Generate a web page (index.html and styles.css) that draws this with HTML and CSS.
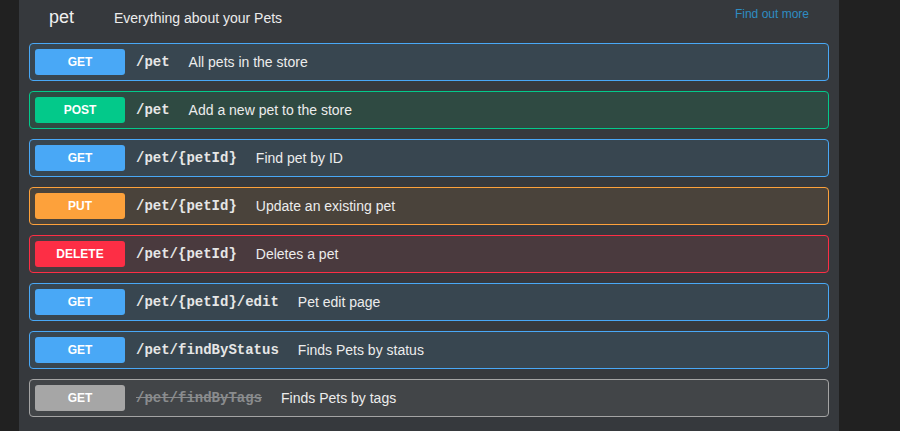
FILE: index.html
```html
<!DOCTYPE html>
<html>
<head>
<meta charset="utf-8">
<link rel="stylesheet" href="styles.css">
</head>
<body>
<div class="page">
  <div class="gutter"></div>
  <div class="panel">
    <div class="tag-head">
      <span class="tag-name">pet</span>
      <span class="tag-desc">Everything about your Pets</span>
      <a class="tag-link">Find out more</a>
    </div>
    <div class="ops">
      <div class="op get"><span class="badge">GET</span><span class="path">/pet</span><span class="summary">All pets in the store</span></div>
      <div class="op post"><span class="badge">POST</span><span class="path">/pet</span><span class="summary">Add a new pet to the store</span></div>
      <div class="op get"><span class="badge">GET</span><span class="path">/pet/{petId}</span><span class="summary">Find pet by ID</span></div>
      <div class="op put"><span class="badge">PUT</span><span class="path">/pet/{petId}</span><span class="summary">Update an existing pet</span></div>
      <div class="op delete"><span class="badge">DELETE</span><span class="path">/pet/{petId}</span><span class="summary">Deletes a pet</span></div>
      <div class="op get"><span class="badge">GET</span><span class="path">/pet/{petId}/edit</span><span class="summary">Pet edit page</span></div>
      <div class="op get"><span class="badge">GET</span><span class="path">/pet/findByStatus</span><span class="summary">Finds Pets by status</span></div>
      <div class="op deprecated"><span class="badge">GET</span><span class="path">/pet/findByTags</span><span class="summary">Finds Pets by tags</span></div>
    </div>
  </div>
  <div class="gutter-right"></div>
</div>
</body>
</html>
```
FILE: styles.css
```css
html, body {
  margin: 0;
  padding: 0;
  background: #212121;
  font-family: "Liberation Sans", Arial, sans-serif;
}
.page {
  display: flex;
  height: 431px;
  overflow: hidden;
}
.gutter {
  width: 19px;
  flex: none;
  background: #212121;
}
.panel {
  width: 820px;
  flex: none;
  background: #36393d;
  padding: 0 10px;
  box-sizing: border-box;
}
.gutter-right {
  flex: 1;
  background: #212121;
}
.tag-head {
  display: flex;
  align-items: baseline;
  height: 43px;
  padding: 0 20px;
  box-sizing: border-box;
  padding-top: 7px;
}
.tag-name {
  color: #f0f0f0;
  font-size: 18px;
  width: 65px;
}
.tag-desc {
  color: #ececec;
  font-size: 14px;
  flex: 1;
}
.tag-link {
  color: #2e8dc2;
  font-size: 12px;
  position: relative;
  top: -5px;
}
.ops {
  display: flex;
  flex-direction: column;
  gap: 10px;
}
.op {
  display: flex;
  align-items: center;
  height: 38px;
  box-sizing: border-box;
  border: 1px solid;
  border-radius: 4px;
  padding: 0 5px;
}
.badge {
  width: 90px;
  height: 26px;
  border-radius: 3px;
  color: #fff;
  font-weight: bold;
  font-size: 12px;
  display: flex;
  align-items: center;
  justify-content: center;
  flex: none;
}
.path {
  font-family: "Liberation Mono", "Courier New", monospace;
  font-weight: bold;
  font-size: 14px;
  color: #e6e6e6;
  padding: 0 10px 0 11px;
}
.summary {
  color: #ececec;
  font-size: 14px;
  padding: 0 9px;
}
.get { background: #384650; border-color: #49a8f6; }
.get .badge { background: #49a8f6; }
.post { background: #2f4a42; border-color: #03c98a; }
.post .badge { background: #03c98a; }
.put { background: #4a433b; border-color: #fda13b; }
.put .badge { background: #fda13b; }
.delete { background: #4a3a3e; border-color: #fd2e45; }
.delete .badge { background: #fd2e45; }
.deprecated { background: #424548; border-color: #a4a4a4; }
.deprecated .badge { background: #a6a6a6; }
.deprecated .path { color: #8a8c8e; text-decoration: line-through; }
```
